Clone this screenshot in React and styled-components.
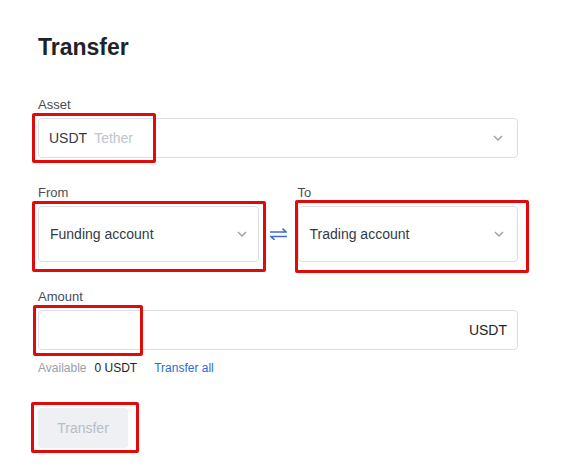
import React from "react";
import styled, { createGlobalStyle } from "styled-components";

const GlobalStyle = createGlobalStyle`
  body {
    margin: 0;
    background: #ffffff;
    font-family: "Liberation Sans", Arial, sans-serif;
  }
`;

const Page = styled.div`
  width: 480px;
  min-height: 444px;
  padding: 31px 0 0 38px;
`;

const Title = styled.h1`
  margin: 0 0 34px;
  font-size: 23px;
  line-height: 32px;
  font-weight: bold;
  color: #1e2329;
`;

const Field = styled.div`
  margin-bottom: ${p => p.gap || 0}px;
`;

const Label = styled.div`
  font-size: 13px;
  line-height: 16px;
  color: #474d57;
  margin-bottom: 5px;
`;

const Box = styled.div`
  position: relative;
  box-sizing: border-box;
  height: ${p => p.h}px;
  border: 1px solid #dcdee2;
  border-radius: 4px;
  display: flex;
  align-items: center;
  padding: 0 ${p => p.pr || 13}px 0 ${p => p.pl || 10}px;
  font-size: 14px;
  color: #333a45;
  background: #fff;
`;

const Value = styled.span`
  flex: 1;
  white-space: nowrap;
`;

const Muted = styled.span`
  color: #c0c4cc;
  margin-left: 7px;
`;

const Suffix = styled.span`
  margin-left: auto;
  color: #1e2329;
`;

const Row = styled.div`
  display: grid;
  grid-template-columns: 1fr 39px 1fr;
  align-items: end;
  margin-bottom: 27px;
`;

const SwapCell = styled.div`
  height: 56px;
  display: flex;
  align-items: center;
  justify-content: center;
`;

const Info = styled.div`
  display: flex;
  align-items: center;
  margin-top: 10px;
  font-size: 12px;
  line-height: 16px;
  color: #9aa0a8;
`;

const Amount = styled.span`
  color: #1e2329;
  margin-left: 8px;
`;

const LinkText = styled.a`
  color: #2d6bd6;
  margin-left: 17px;
  text-decoration: none;
`;

const ButtonWrap = styled.div`
  position: relative;
  margin-top: 32px;
  width: 90px;
`;

const Button = styled.button`
  display: block;
  width: 90px;
  height: 40px;
  border: none;
  border-radius: 4px;
  background: #eef0f4;
  color: #b7bdc6;
  font-family: "Liberation Sans", Arial, sans-serif;
  font-size: 14px;
`;

const Highlight = styled.div`
  position: absolute;
  box-sizing: border-box;
  left: ${p => p.l}px;
  top: ${p => p.t}px;
  width: ${p => p.w}px;
  height: ${p => p.hh}px;
  border: 3px solid #e10a0a;
  border-radius: 2px;
  pointer-events: none;
`;

const Chevron = () => (
  <svg width="10" height="6" viewBox="0 0 10 6" fill="none">
    <path d="M1 1l4 4 4-4" stroke="#9aa0a8" strokeWidth="1.4" />
  </svg>
);

const SwapIcon = () => (
  <svg width="17" height="12" viewBox="0 0 17 12" fill="none">
    <path d="M0 4h16L12.5 0.6" stroke="#3b6fd4" strokeWidth="1.6" />
    <path d="M17 8.5H1l3.5 3.4" stroke="#3b6fd4" strokeWidth="1.6" />
  </svg>
);

export default function App() {
  return (
    <>
      <GlobalStyle />
      <Page>
        <Title>Transfer</Title>

        <Field gap={27}>
          <Label>Asset</Label>
          <Box h={40} pl={10} pr={14}>
            <Value>
              USDT<Muted>Tether</Muted>
            </Value>
            <Chevron />
            <Highlight l={-7} t={-6} w={124} hh={50} />
          </Box>
        </Field>

        <Row>
          <Field>
            <Label>From</Label>
            <Box h={56} pl={11} pr={11}>
              <Value>Funding account</Value>
              <Chevron />
              <Highlight l={-7} t={-6} w={234} hh={71} />
            </Box>
          </Field>
          <SwapCell>
            <SwapIcon />
          </SwapCell>
          <Field>
            <Label>To</Label>
            <Box h={56} pl={11} pr={13}>
              <Value>Trading account</Value>
              <Chevron />
              <Highlight l={-4} t={-7} w={234} hh={73} />
            </Box>
          </Field>
        </Row>

        <Field>
          <Label>Amount</Label>
          <Box h={40} pr={10}>
            <Suffix>USDT</Suffix>
            <Highlight l={-6} t={-6} w={110} hh={51} />
          </Box>
        </Field>

        <Info>
          Available<Amount>0 USDT</Amount>
          <LinkText>Transfer all</LinkText>
        </Info>

        <ButtonWrap>
          <Button>Transfer</Button>
          <Highlight l={-7} t={-6} w={108} hh={51} />
        </ButtonWrap>
      </Page>
    </>
  );
}
